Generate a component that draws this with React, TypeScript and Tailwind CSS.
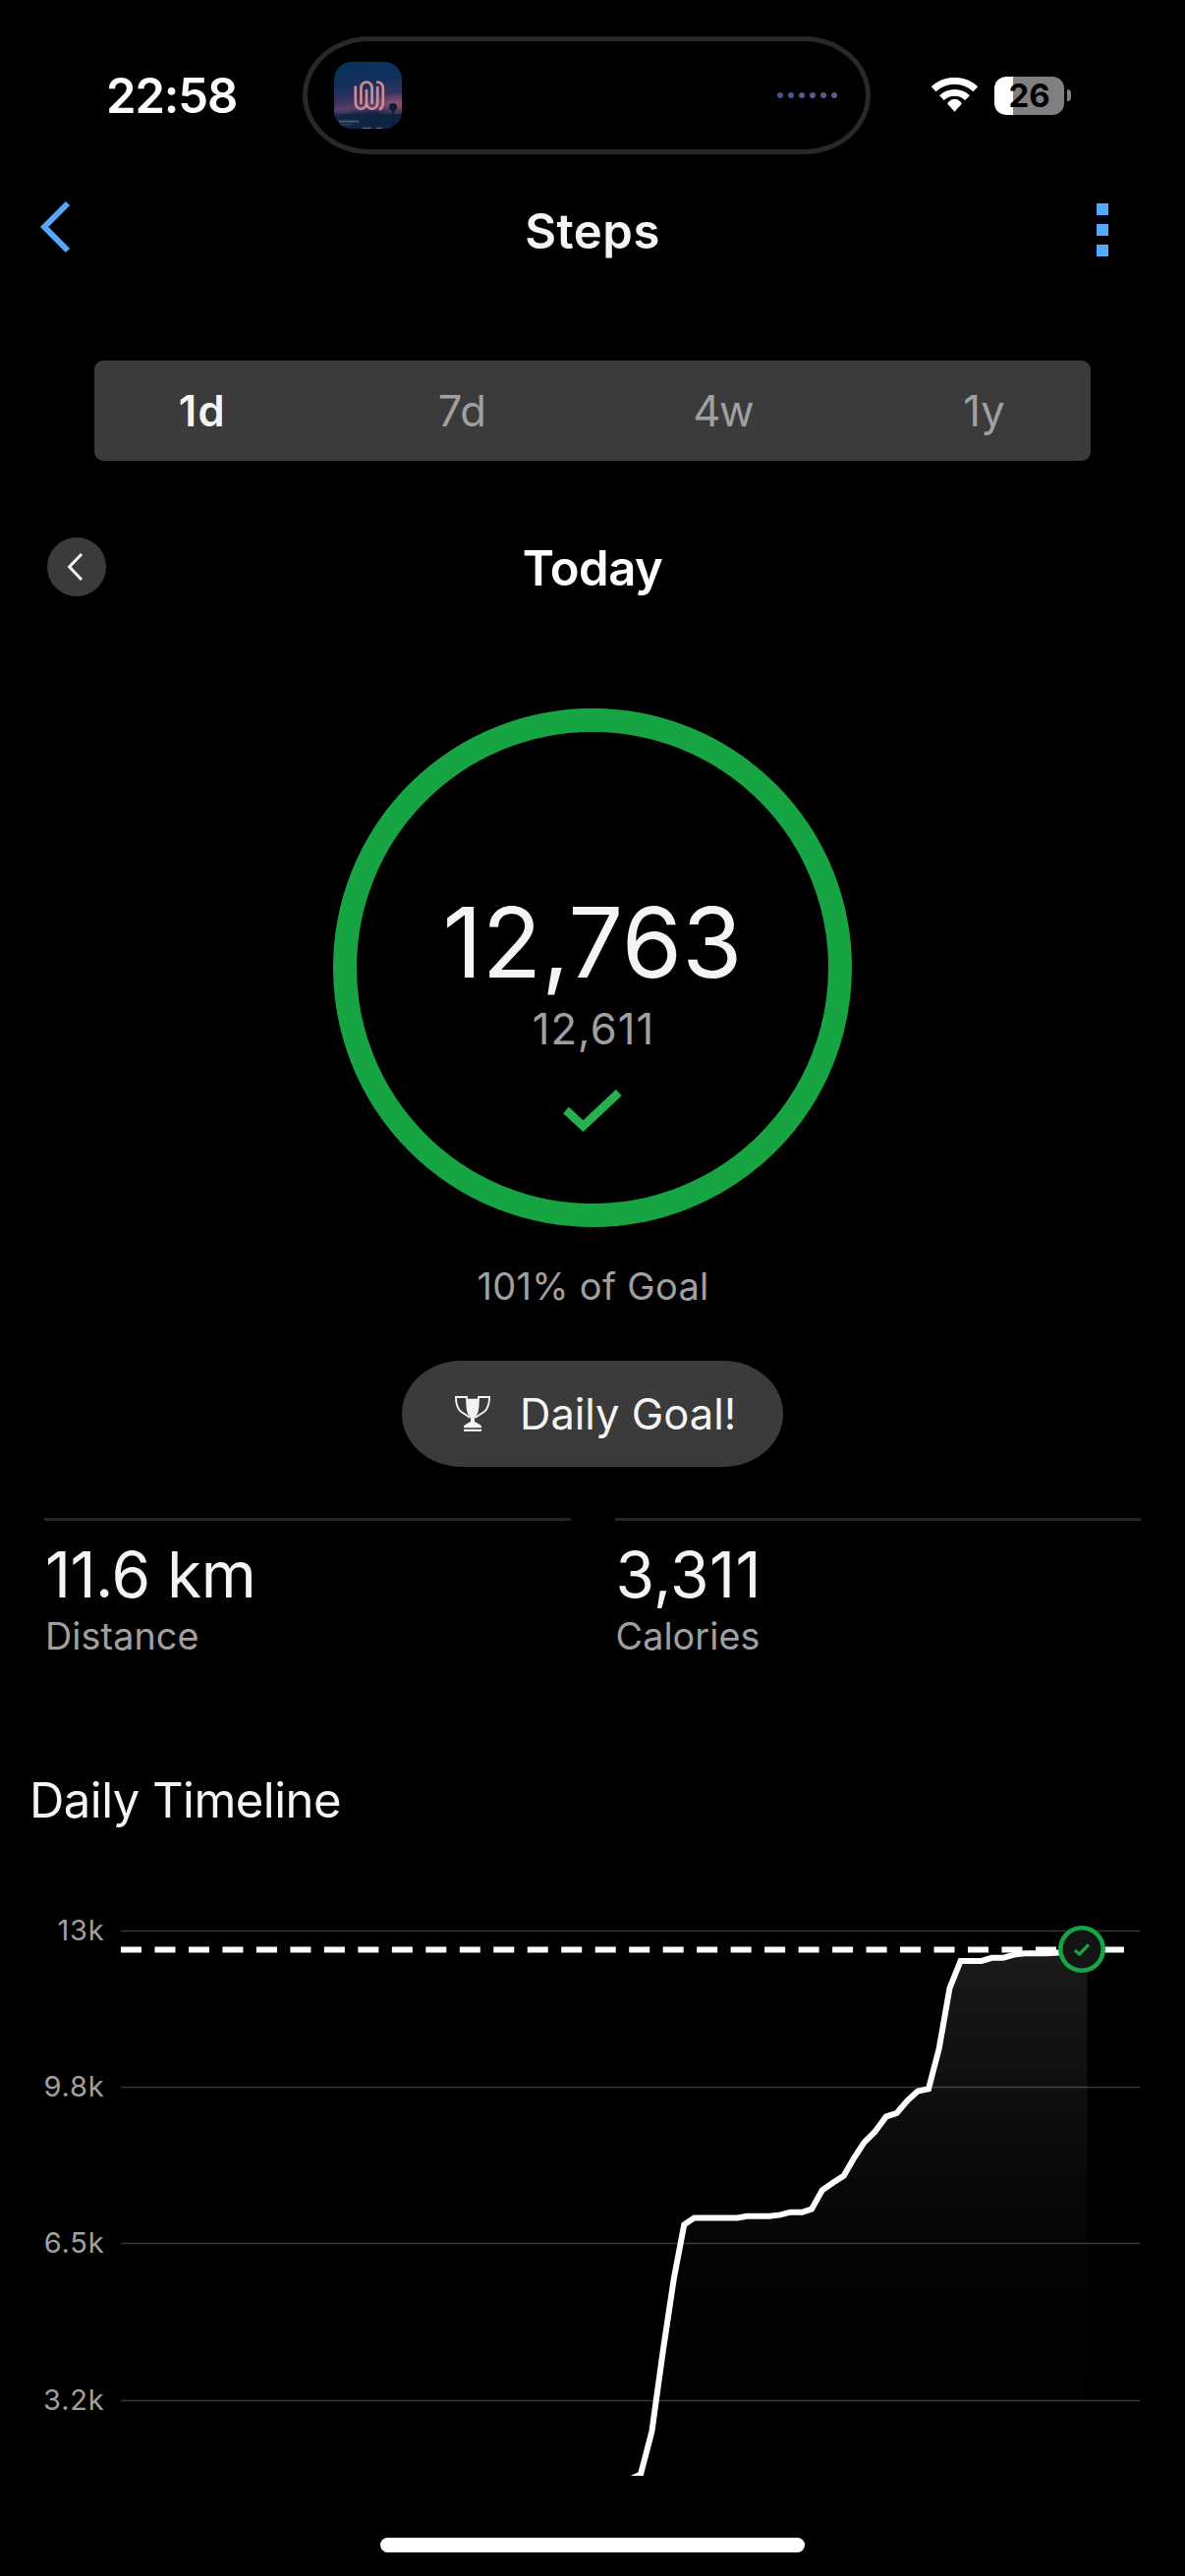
import React from "react";

const WHITE = "#f4f4f4";

function AlbumArt() {
  return (
    <svg width="69" height="68" viewBox="0 0 69 68" className="block">
      <defs>
        <linearGradient id="sky" x1="0" y1="0" x2="0.15" y2="1">
          <stop offset="0" stopColor="#07335b" />
          <stop offset="0.35" stopColor="#12305c" />
          <stop offset="0.58" stopColor="#33325f" />
          <stop offset="0.72" stopColor="#5c3f66" />
          <stop offset="0.79" stopColor="#302c4f" />
          <stop offset="0.84" stopColor="#10233f" />
          <stop offset="1" stopColor="#0a2a4b" />
        </linearGradient>
        <radialGradient id="glow" cx="1" cy="0.68" r="0.5">
          <stop offset="0" stopColor="#a85f7c" stopOpacity="0.75" />
          <stop offset="1" stopColor="#a85f7c" stopOpacity="0" />
        </radialGradient>
        <clipPath id="art">
          <rect width="69" height="68" rx="18" />
        </clipPath>
      </defs>
      <g clipPath="url(#art)">
        <rect width="69" height="68" fill="url(#sky)" />
        <rect y="26" width="69" height="27" fill="url(#glow)" />
        <rect y="53" width="69" height="15" fill="#0d2442" opacity="0.8" />
        <g fill="#141a38">
          <circle cx="60" cy="46" r="4" />
          <rect x="59" y="47" width="2.4" height="18" />
        </g>
        <g fill="none" stroke="#cf8b93" strokeWidth="2.7" strokeLinecap="round">
          <path d="M21.8 25.5V42a5.6 5.8 0 0 0 11.2 0V29" />
          <path d="M27.4 42V26.5a5.6 6 0 0 1 11.2 0V42" />
          <path d="M33 42a5.6 5.8 0 0 0 11.2 0V26" />
          <path d="M44.2 20.6a5.6 5.8 0 0 1 5.6 6V41c0 4-1 6-3 7" />
        </g>
        <g fill="#8e8fa3">
          <rect x="5" y="59.5" width="20" height="2.2" opacity="0.45" />
          <rect x="5" y="63" width="14" height="1.4" opacity="0.3" />
          <rect x="29" y="66.8" width="9" height="1.2" fill="#b57a80" opacity="0.7" />
          <rect x="43" y="66.8" width="6" height="1.2" fill="#b57a80" opacity="0.7" />
        </g>
      </g>
    </svg>
  );
}

function Wifi() {
  return (
    <svg width="47" height="36" viewBox="0 0 47 36" className="block">
      <g fill="none" stroke="#fff" strokeWidth="7">
        <path d="M2.2 11.8A31 31 0 0 1 44.8 11.8" />
        <path d="M10.4 20.6A18.9 18.9 0 0 1 36.6 20.6" strokeWidth="6.8" />
      </g>
      <path d="M23.5 35.3 16.7 27.8Q15.9 26.6 17 25.7 20 22.4 23.5 22.4T30 25.7Q31.1 26.6 30.3 27.8Z" fill="#fff" transform="translate(0 -.6)" />
    </svg>
  );
}

function Battery() {
  return (
    <div className="flex items-center gap-[3px]">
      <div className="flex h-[39px] w-[71px] items-center justify-center rounded-[12px] bg-[linear-gradient(90deg,#fff_19px,#808080_19px)] text-[33px] leading-none font-bold text-black">
        26
      </div>
      <div className="h-[12px] w-[4px] rounded-r-full bg-[#808080]" />
    </div>
  );
}

const ISLAND_DOTS = ["bg-[#3f5692]", "bg-[#4a5893]", "bg-[#545992]", "bg-[#5b5891]", "bg-[#5f5890]", "bg-[#605890]"];

function StatusBar() {
  return (
    <div className="flex h-[194px] items-center">
      <div className="w-[308px] pt-[2px] pl-[108px] text-[49px] leading-[60px] font-semibold tracking-[-1.15px] text-white">22:58</div>
      <div className="flex h-[120px] w-[578px] items-center justify-between rounded-[68px/60px] border-[5px] border-[#282828] pr-[29px] pl-[27px]">
        <AlbumArt />
        <div className="flex gap-[5px]">
          {ISLAND_DOTS.map((c, i) => (
            <span key={i} className={`h-[6px] w-[6px] rounded-full ${c}`} />
          ))}
        </div>
      </div>
      <div className="ml-[62px] flex items-center gap-[17px]">
        <Wifi />
        <Battery />
      </div>
    </div>
  );
}

function NavBar() {
  return (
    <div className="grid h-[82px] grid-cols-[120px_1fr_120px] items-center">
      <svg width="32" height="54" viewBox="0 0 32 54" className="-mt-[8px] ml-[40px] block">
        <path d="M29 3 5.2 27 29 51" fill="none" stroke="#54a9ff" strokeWidth="6" />
      </svg>
      <h1 className="pt-[2px] text-center text-[49px] leading-[60px] font-semibold tracking-[0.5px] text-[#f4f4f4]">Steps</h1>
      <div className="-mt-[2px] ml-[30px] flex flex-col gap-[9px]">
        <span className="h-[12px] w-[12px] bg-[#54a9ff]" />
        <span className="h-[12px] w-[12px] bg-[#54a9ff]" />
        <span className="h-[12px] w-[12px] bg-[#54a9ff]" />
      </div>
    </div>
  );
}

function RangeTabs() {
  return (
    <div className="mx-[96px] mt-[91px] flex h-[102px] items-center justify-between rounded-[9px] bg-[#3b3b3b] text-center text-[43.5px] leading-[60px] text-[#a0a0a0]">
      <span className="w-[218px] pl-[2px] font-semibold tracking-[1.5px] text-[#f4f4f4]">1d</span>
      <span className="w-[218px]">7d</span>
      <span className="w-[218px] tracking-[-1.5px]">4w</span>
      <span className="w-[218px] pl-[1px]">1y</span>
    </div>
  );
}

function DayHeader() {
  return (
    <div className="mx-[48px] mt-[78px] grid h-[60px] grid-cols-[60px_1fr_60px] items-center">
      <div className="flex h-[60px] w-[60px] items-center rounded-full bg-[#3b3b3b] pl-[20px]">
        <svg width="17" height="30" viewBox="0 0 17 30" className="block">
          <path d="M15 2 2.6 15 15 28" fill="none" stroke={WHITE} strokeWidth="3" />
        </svg>
      </div>
      <h2 className="pt-[4px] text-center text-[49px] leading-[56px] font-semibold tracking-[-0.5px] text-white">Today</h2>
    </div>
  );
}

function GoalRing() {
  return (
    <div className="mx-auto mt-[114px] flex h-[528px] w-[528px] flex-col items-center rounded-full border-[24px] border-[#17a443] pt-[154px]">
      <div className="text-[99px] leading-[120px] text-[#f4f4f4]">12,763</div>
      <div className="pl-[2px] text-[43.5px] leading-[56px] tracking-[1.1px] text-[#a0a0a0]">12,611</div>
      <svg width="60" height="43" viewBox="0 0 60 43" className="mt-[34px] block">
        <path d="M3 21 20.5 37.2 56.8 3" fill="none" stroke="#26b04e" strokeWidth="8.6" />
      </svg>
    </div>
  );
}

function Trophy() {
  return (
    <svg width="36" height="36" viewBox="0 0 36 36" className="block">
      <path d="M11.2 2.8H24.8C24.8 11 24 17 22 19.5L20 22V26C22 27.5 25.5 28.5 27 30.5V32.2H9V30.5C10.5 28.5 14 27.5 16 26V22L14 19.5C12 17 11.2 11 11.2 2.8Z" fill={WHITE} />
      <rect x="9" y="33.8" width="18" height="2.2" fill={WHITE} />
      <g fill="none" stroke={WHITE} strokeWidth="1.9">
        <path d="M12 3.5V.95H.95C.95 9 2.5 12.5 6 15.8L15.5 22" />
        <path d="M24 3.5V.95H35.05C35.05 9 33.5 12.5 30 15.8L20.5 22" />
      </g>
    </svg>
  );
}

function GoalBadge() {
  return (
    <div className="mx-auto mt-[46px] flex h-[108px] w-[388px] items-center gap-[30px] rounded-[61px/54px] bg-[#3b3b3b] pl-[54px]">
      <Trophy />
      <span className="text-[43.5px] leading-[60px] whitespace-nowrap text-[#f4f4f4]">Daily Goal!</span>
    </div>
  );
}

function Stat({ value, label, valueClass }: { value: string; label: string; valueClass: string }) {
  return (
    <div className="border-t-[3px] border-[#262626] pt-[15px]">
      <div className={`pl-[1px] text-[64px] leading-[80px] text-[#f4f4f4] ${valueClass}`}>{value}</div>
      <div className="pl-[1px] text-[37.7px] leading-[45px] tracking-[0.1px] text-[#a0a0a0]">{label}</div>
    </div>
  );
}

const POINTS: [number, number][] = [
  [641.5, 2523.5], [652, 2518.5], [663.4, 2474.9], [674.6, 2394], [685.7, 2320], [696.3, 2264.2], [706.5, 2257.5], [750.7, 2257.5],
  [760, 2255.7], [783, 2255.7], [794, 2254.4], [804.5, 2251.7], [816.5, 2251.7], [826, 2248.6], [836.8, 2229.4], [847.6, 2221.8],
  [858.8, 2214.6], [869, 2196.8], [879.5, 2180.7], [890.3, 2170], [901.8, 2154.4], [912.6, 2150.8], [923.8, 2137.9], [934, 2128.5],
  [945, 2126.3], [955.7, 2085.2], [966.5, 2023.6], [977.6, 1995.9], [999, 1995.9], [1009.5, 1992.8], [1021, 1992.8], [1031.8, 1989.6],
  [1042.6, 1988.3], [1064.5, 1988.3], [1078, 1987.4], [1106.5, 1987],
];

const GRID = [
  { label: "13k", y: 1965.5 },
  { label: "9.8k", y: 2124.5 },
  { label: "6.5k", y: 2283.5 },
  { label: "3.2k", y: 2443.5 },
];

function TimelineChart() {
  const line = POINTS.map(([x, y]) => `${x},${y}`).join(" ");
  return (
    <svg width="1206" height="656" viewBox="0 1864 1206 656" className="block">
      <defs>
        <linearGradient id="area" gradientUnits="userSpaceOnUse" x1="0" y1="1980" x2="0" y2="2520">
          <stop offset="0" stopColor="#fff" stopOpacity="0.105" />
          <stop offset="0.3" stopColor="#fff" stopOpacity="0.055" />
          <stop offset="0.6" stopColor="#fff" stopOpacity="0.015" />
          <stop offset="1" stopColor="#fff" stopOpacity="0" />
        </linearGradient>
      </defs>
      <polygon points={`${line} 1106.5,2602 641,2602`} fill="url(#area)" />
      {GRID.map((g) => (
        <g key={g.label}>
          <path d={`M123 ${g.y}H1160.5`} stroke="#fff" strokeOpacity="0.22" strokeWidth="1.4" />
          <text x="106.500" y={g.y + 9.5} textAnchor="end" fontSize="29" letterSpacing="0.8" fill="#a0a0a0">
            {g.label}
          </text>
        </g>
      ))}
      <path d="M123 1984.5H1144" stroke="#fff" strokeWidth="6" strokeDasharray="21 13.48" />
      <polyline points={line} fill="none" stroke="#fff" strokeWidth="6" strokeLinejoin="miter" />
      <circle cx="1101" cy="1984" r="21.7" fill="#141414" stroke="#17a443" strokeWidth="4.6" />
      <path d="M1093.8 1985.3 1098.7 1989 1108 1979.3" fill="none" stroke="#17a443" strokeWidth="3.3" />
    </svg>
  );
}

export default function App() {
  return (
    <div className="flex h-[2622px] w-[1206px] flex-col overflow-hidden bg-black font-['Inter',sans-serif]">
      <StatusBar />
      <NavBar />
      <RangeTabs />
      <DayHeader />
      <GoalRing />
      <p className="mt-[30px] pl-[1px] text-center text-[38px] leading-[60px] tracking-[0.3px] text-[#a0a0a0]">101% of Goal</p>
      <GoalBadge />
      <div className="mt-[52px] grid grid-cols-2 gap-[45px] px-[45px]">
        <Stat value="11.6 km" label="Distance" valueClass="tracking-[-0.5px]" />
        <Stat value="3,311" label="Calories" valueClass="tracking-[0.4px]" />
      </div>
      <h3 className="mt-[113px] -mb-px ml-[30px] text-[49px] leading-[64px] tracking-[-0.53px] text-[#f4f4f4]">Daily Timeline</h3>
      <TimelineChart />
      <div className="mx-auto mt-[63px] h-[15px] w-[432px] rounded-full bg-white" />
    </div>
  );
}
